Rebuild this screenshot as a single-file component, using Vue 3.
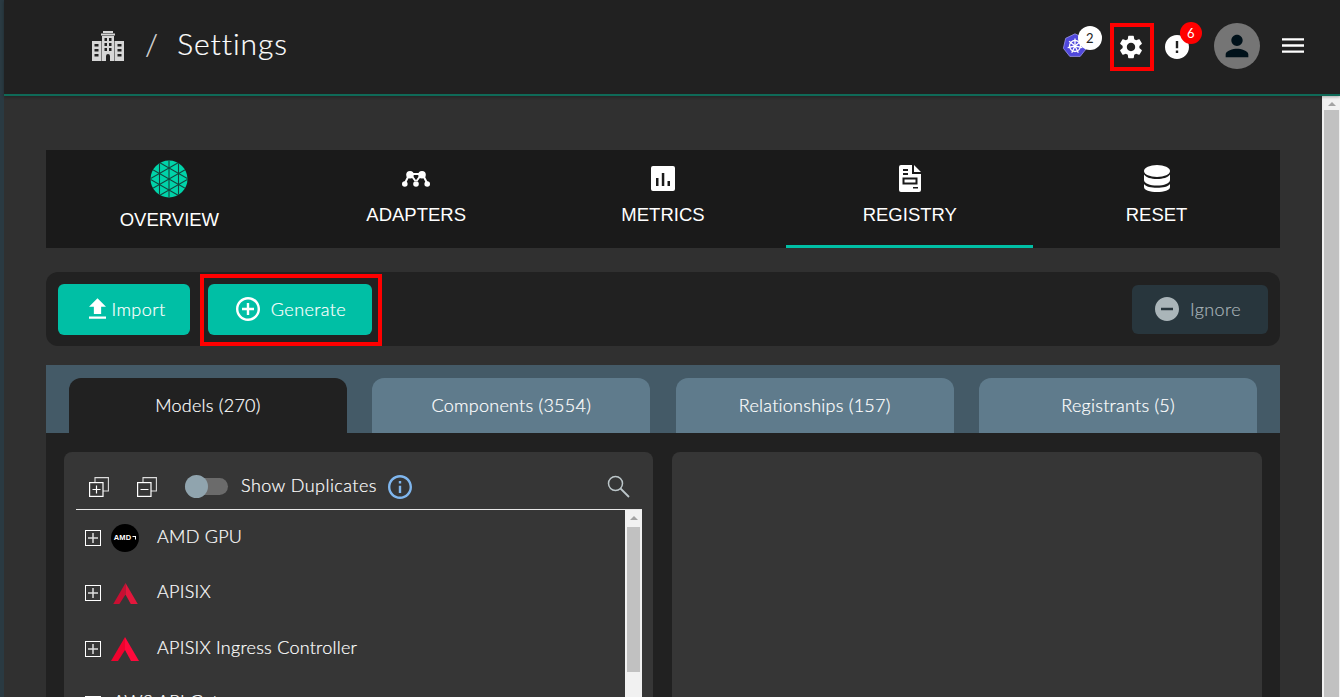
<script setup>
const gridLines = []
for (const x of [-19, -9.5, 0, 9.5, 19]) {
  gridLines.push({ x1: x, y1: -20, x2: x, y2: 20 })
}
for (const b of [-22, -11, 0, 11, 22]) {
  gridLines.push({ x1: -20, y1: b - 11.5, x2: 20, y2: b + 11.5 })
  gridLines.push({ x1: -20, y1: b + 11.5, x2: 20, y2: b - 11.5 })
}

const sections = [
  { label: 'OVERVIEW', key: 'overview' },
  { label: 'ADAPTERS', key: 'adapters' },
  { label: 'METRICS', key: 'metrics' },
  { label: 'REGISTRY', key: 'registry', active: true },
  { label: 'RESET', key: 'reset' }
]

const registryTabs = [
  { label: 'Models (270)', active: true },
  { label: 'Components (3554)' },
  { label: 'Relationships (157)' },
  { label: 'Registrants (5)' }
]

const models = [
  { name: 'AMD GPU', logo: 'amd' },
  { name: 'APISIX', logo: 'apisix-dim' },
  { name: 'APISIX Ingress Controller', logo: 'apisix' },
  { name: 'AWS API Gateway', logo: 'none' }
]

const wheelSpokes = [0, 51.4, 102.8, 154.2, 205.6, 257, 308.4]
</script>

<template>
  <div class="page">
    <div class="edge"></div>
    <div class="main">
      <header class="topbar">
        <div class="crumbs">
          <svg class="building" viewBox="0 0 32 30" width="32" height="30">
            <path fill="#d6d6d6" d="M11 0h10v2h-10zM9 2.500h14v2H9zM10 5h12v25h-4v-5a2 2 0 0 0-4 0v5h-4zM0 10h9.500v20H0zM22.500 10H32v20h-9.500z" />
            <path fill="#212121" d="M12.500 7h2.500v3h-2.500zM17 7h2.500v3H17zM12.500 12h2.500v3h-2.500zM17 12h2.500v3H17zM12.500 17h2.500v3h-2.500zM17 17h2.500v3H17zM2.500 13h4v2.500h-4zM2.500 18h4v2.500h-4zM2.500 23h4v2.500h-4zM25.500 13h4v2.500h-4zM25.500 18h4v2.500h-4zM25.500 23h4v2.500h-4z" />
          </svg>
          <span class="slash">/</span>
          <span class="crumb-title">Settings</span>
        </div>
        <div class="actions">
          <div class="k8s">
            <svg viewBox="0 0 26 26" width="26" height="26">
              <path fill="#5048dc" stroke="#9a95e6" stroke-width=".8" d="M13 .8l9.300 4.500 2.300 10-6.400 8.100H7.800l-6.400-8.100 2.300-10z" />
              <g stroke="#fff" stroke-width="1.300" fill="none">
                <circle cx="13" cy="13" r="5.500" />
                <line v-for="a in wheelSpokes" :key="a" x1="13" y1="13" x2="13" y2="5.500" :transform="`rotate(${a} 13 13)`" />
              </g>
            </svg>
            <span class="count count-white">2</span>
          </div>
          <div class="gear-mark">
            <svg viewBox="0 0 24 24" width="28" height="28"><path fill="#fff" d="M19.140 12.940c.04-.3.06-.61.06-.94 0-.32-.02-.64-.07-.94l2.030-1.580c.18-.14.23-.41.12-.61l-1.920-3.320c-.12-.22-.37-.29-.59-.22l-2.390.96c-.5-.38-1.030-.7-1.620-.94l-.36-2.540c-.04-.24-.24-.41-.48-.41h-3.840c-.24 0-.43.17-.47.41l-.36 2.540c-.59.24-1.130.57-1.620.94l-2.390-.96c-.22-.08-.47 0-.59.22L2.740 8.870c-.12.21-.08.47.12.61l2.030 1.580c-.05.3-.09.63-.09.94s.02.64.07.94l-2.030 1.580c-.18.14-.23.41-.12.61l1.920 3.320c.12.22.37.29.59.22l2.390-.96c.5.38 1.030.7 1.620.94l.36 2.540c.05.24.24.41.48.41h3.840c.24 0 .44-.17.47-.41l.36-2.540c.59-.24 1.130-.56 1.620-.94l2.390.96c.22.08.47 0 .59-.22l1.920-3.320c.12-.22.07-.47-.12-.61l-2.010-1.580zM12 15.600c-1.980 0-3.600-1.620-3.600-3.600s1.620-3.600 3.600-3.600 3.600 1.620 3.600 3.600-1.620 3.600-3.600 3.600z" /></svg>
          </div>
          <div class="alert">
            <svg viewBox="2 2 20 20" width="24" height="24"><path fill="#fff" d="M12 2C6.480 2 2 6.480 2 12s4.480 10 10 10 10-4.480 10-10S17.520 2 12 2zm1 15h-2v-2h2v2zm0-4h-2V7h2v6z" /></svg>
            <span class="count count-red">6</span>
          </div>
          <div class="avatar">
            <svg viewBox="0 0 24 24" width="34" height="34"><path fill="#00111a" d="M12 12c2.210 0 4-1.790 4-4s-1.790-4-4-4-4 1.790-4 4 1.790 4 4 4zm0 2c-2.670 0-8 1.340-8 4v2h16v-2c0-2.660-5.330-4-8-4z" /></svg>
          </div>
          <svg class="burger" viewBox="3 6 18 12" width="22" height="15"><path fill="#fff" d="M3 18h18v-2H3v2zm0-5h18v-2H3v2zm0-7v2h18V6H3z" /></svg>
        </div>
      </header>

      <div class="scroll-area">
        <div class="content">
          <nav class="sections">
            <div v-for="s in sections" :key="s.key" class="section" :class="{ 'section-active': s.active, 'section-overview': s.key === 'overview' }">
              <svg v-if="s.key === 'overview'" class="section-icon" viewBox="-19 -19 38 38" width="38" height="38">
                <clipPath id="overview-clip"><circle r="18.500" /></clipPath>
                <circle r="18.500" fill="#00d3a9" />
                <g clip-path="url(#overview-clip)" stroke="#14443c" stroke-width="1.100">
                  <line v-for="(l, i) in gridLines" :key="i" :x1="l.x1" :y1="l.y1" :x2="l.x2" :y2="l.y2" />
                </g>
              </svg>
              <div v-else class="section-slot">
                <svg v-if="s.key === 'adapters'" viewBox="0 0 28 16" width="28" height="16">
                  <g fill="#fff">
                    <circle cx="2.800" cy="13" r="2.800" /><circle cx="14" cy="13" r="2.800" /><circle cx="25.200" cy="13" r="2.800" />
                    <circle cx="8" cy="3.800" r="3.800" /><circle cx="20" cy="3.800" r="3.800" />
                  </g>
                  <path fill="none" stroke="#fff" stroke-width="2" d="M3 12L7 4M8 3h12M21 4l4 8M9 4l4.500 6M19 4l-4.500 6" />
                </svg>
                <svg v-else-if="s.key === 'metrics'" viewBox="0 0 24 25" width="24" height="25">
                  <path fill="#fff" fill-rule="evenodd" d="M2 0h20a2 2 0 0 1 2 2v21a2 2 0 0 1-2 2H2a2 2 0 0 1-2-2V2a2 2 0 0 1 2-2zM5 12v8h2.500v-8zM10.800 7v13h2.500V7zM16.500 15v5H19v-5z" />
                </svg>
                <svg v-else-if="s.key === 'registry'" viewBox="0 0 22 27" width="22" height="27">
                  <path fill="#fff" d="M2 0h11v9h9v16a2 2 0 0 1-2 2H2a2 2 0 0 1-2-2V2a2 2 0 0 1 2-2zM15 0l7 7h-7z" />
                  <g fill="#1a1a1a">
                    <rect x="4" y="4" width="5" height="2" /><rect x="4" y="8" width="5" height="2" /><rect x="14" y="22" width="5" height="1.500" />
                  </g>
                  <rect x="4.500" y="13.500" width="13" height="5" fill="none" stroke="#1a1a1a" stroke-width="2" />
                </svg>
                <svg v-else viewBox="0 0 26 27" width="26" height="27">
                  <ellipse cx="13" cy="6" rx="13" ry="6" fill="#fff" />
                  <path fill="#fff" d="M0 9.500c2 3 7 4.500 13 4.500s11-1.500 13-4.500V15c0 3.500-6 5.500-13 5.500S0 18.500 0 15z" />
                  <path fill="#fff" d="M0 19c2 3 7 3.700 13 3.700S24 22 26 19v3c0 3.500-6 5-13 5S0 25.500 0 22z" />
                </svg>
              </div>
              <span class="section-label">{{ s.label }}</span>
            </div>
          </nav>

          <div class="toolbar">
            <button class="btn btn-import">
              <svg viewBox="5 3 14 17" width="17" height="21"><path fill="#fff" d="M9 16h6v-6h4l-7-7-7 7h4zm-4 2h14v2H5z" /></svg>
              <span>Import</span>
            </button>
            <div class="mark-box">
              <button class="btn btn-generate">
                <svg viewBox="2 2 20 20" width="24" height="24"><path fill="#fff" d="M13 7h-2v4H7v2h4v4h2v-4h4v-2h-4V7zm-1-5C6.480 2 2 6.480 2 12s4.480 10 10 10 10-4.480 10-10S17.520 2 12 2zm0 18c-4.410 0-8-3.590-8-8s3.590-8 8-8 8 3.590 8 8-3.590 8-8 8z" /></svg>
                <span>Generate</span>
              </button>
            </div>
            <button class="btn btn-ignore">
              <svg viewBox="2 2 20 20" width="24" height="24"><path fill="#aab5b9" d="M12 2C6.480 2 2 6.480 2 12s4.480 10 10 10 10-4.480 10-10S17.520 2 12 2zm5 11H7v-2h10v2z" /></svg>
              <span>Ignore</span>
            </button>
          </div>

          <div class="registry">
            <div class="registry-tabs">
              <div v-for="t in registryTabs" :key="t.label" class="registry-tab" :class="{ 'registry-tab-active': t.active }">{{ t.label }}</div>
            </div>
            <div class="registry-body">
              <div class="card card-list">
                <div class="card-head">
                  <svg class="dup" viewBox="0 0 20 20" width="20" height="20">
                    <path fill="none" stroke="#ddd" stroke-width="1.100" d="M6 5V.6h13.400V14H14" />
                    <rect x=".6" y="5.600" width="13.400" height="13.800" fill="none" stroke="#fff" stroke-width="1.200" />
                    <path stroke="#fff" stroke-width="1.200" d="M3.500 12.500h8M7.500 8.500v8" />
                  </svg>
                  <svg class="dup dup-minus" viewBox="0 0 20 20" width="20" height="20">
                    <path fill="none" stroke="#ddd" stroke-width="1.100" d="M6 5V.6h13.400V14H14" />
                    <rect x=".6" y="5.600" width="13.400" height="13.800" fill="none" stroke="#fff" stroke-width="1.200" />
                    <path stroke="#fff" stroke-width="1.200" d="M3.500 12.500h8" />
                  </svg>
                  <div class="switch"><span class="switch-thumb"></span></div>
                  <span class="switch-label">Show Duplicates</span>
                  <svg class="info" viewBox="2 2 20 20" width="24" height="24"><path fill="#7fb6ee" d="M11 7h2v2h-2zm0 4h2v6h-2zm1-9C6.480 2 2 6.480 2 12s4.480 10 10 10 10-4.480 10-10S17.520 2 12 2zm0 18c-4.410 0-8-3.590-8-8s3.590-8 8-8 8 3.590 8 8-3.590 8-8 8z" /></svg>
                  <svg class="search" viewBox="0 0 23 23" width="23" height="23">
                    <circle cx="8.500" cy="8.500" r="7" fill="none" stroke="#bcc6c9" stroke-width="1.500" />
                    <path stroke="#bcc6c9" stroke-width="1.800" d="M13.500 13.500l8.500 8.500" />
                  </svg>
                </div>
                <div class="list-wrap">
                  <div class="list">
                    <div v-for="m in models" :key="m.name" class="row" :class="{ 'row-plain': m.logo === 'none' }">
                      <span class="expander">
                        <svg viewBox="0 0 10 10" width="10" height="10"><path stroke="#ddd" stroke-width="1.500" d="M0 5h10M5 0v10" /></svg>
                      </span>
                      <div v-if="m.logo !== 'none'" class="logo">
                        <span v-if="m.logo === 'amd'" class="amd">AMD<svg viewBox="0 0 6 6" width="4" height="4"><path fill="#fff" d="M0 0h6v6L4.500 4.500V1.500H1.500z" /></svg></span>
                        <svg v-else-if="m.logo === 'apisix-dim'" viewBox="0 0 28 24" width="25" height="21">
                          <path fill="#c80f32" d="M14 0L0 24h7l7-11z" /><path fill="#e3173c" d="M14 0l14 24h-8l-6-11z" />
                        </svg>
                        <svg v-else viewBox="0 0 28 24" width="28" height="24">
                          <path fill="#f0032e" d="M14 0L0 24h7l7-11z" /><path fill="#ff0a3c" d="M14 0l14 24h-8l-6-11z" />
                        </svg>
                      </div>
                      <span class="row-name">{{ m.name }}</span>
                    </div>
                  </div>
                  <div class="list-bar">
                    <span class="bar-arrow"></span>
                    <div class="bar-thumb"></div>
                  </div>
                </div>
              </div>
              <div class="card"></div>
            </div>
          </div>
        </div>
        <div class="page-bar">
          <span class="bar-arrow"></span>
          <div class="page-thumb"></div>
        </div>
      </div>
    </div>
  </div>
</template>

<style>
html, body {
  margin: 0;
  height: 100%;
  overflow: hidden;
  background: #303030;
}
</style>

<style scoped>
.page {
  display: flex;
  height: 697px;
  overflow: hidden;
  font-family: Lato, "Open Sans", sans-serif;
  font-weight: 300;
  letter-spacing: .25px;
  -webkit-text-stroke: .2px;
  color: #fff;
}

.edge {
  width: 4px;
  flex-shrink: 0;
  background: #2a3a42;
}

.main {
  flex: 1;
  display: flex;
  flex-direction: column;
  min-width: 0;
}

.topbar {
  position: relative;
  z-index: 1;
  height: 96px;
  box-sizing: border-box;
  flex-shrink: 0;
  display: flex;
  align-items: center;
  justify-content: space-between;
  background: #212121;
  border-bottom: 2px solid #0f6a58;
  box-shadow: 0 1px 3px rgba(0, 0, 0, .3);
  padding: 0 36px 3px 88px;
}

.crumbs {
  display: flex;
  align-items: center;
}

.slash {
  margin: 0 0 6px 21px;
  font-size: 30px;
  color: #ddd;
}

.crumb-title {
  margin: 0 0 6px 19px;
  font-size: 30px;
  letter-spacing: .9px;
}

.actions {
  display: flex;
  align-items: center;
}

.k8s,
.alert {
  position: relative;
  display: flex;
}

.k8s {
  margin: 1px 0 0 1px;
}

.count {
  position: absolute;
  display: flex;
  align-items: center;
  justify-content: center;
  border-radius: 50%;
  font-size: 13px;
  font-weight: 400;
  -webkit-text-stroke: 0;
}

.count-white {
  left: 16px;
  top: -7px;
  width: 24px;
  height: 24px;
  background: #fff;
  color: #222;
}

.count-red {
  left: 15px;
  top: -13px;
  width: 22px;
  height: 22px;
  background: #f00;
  color: #fff;
}

.gear-mark {
  width: 44px;
  height: 48px;
  box-sizing: border-box;
  display: flex;
  align-items: center;
  justify-content: center;
  margin: 2px 0 0 22px;
  padding-right: 2px;
  border: 4px solid #f00;
}

.alert {
  margin: 2px 0 0 11px;
}

.avatar {
  width: 46px;
  height: 46px;
  display: flex;
  align-items: center;
  justify-content: center;
  margin-left: 25px;
  border-radius: 50%;
  background: #757575;
}

.burger {
  margin-left: 22px;
}

.scroll-area {
  flex: 1;
  display: flex;
  min-height: 0;
}

.content {
  flex: 1;
  min-width: 0;
  padding: 54px 42px 0;
  overflow: hidden;
  background: #303030;
}

.page-bar {
  width: 15px;
  flex-shrink: 0;
  padding: 0 1px;
  border-left: 1px solid #eee;
  background: #f1f1f1;
  display: flex;
  flex-direction: column;
  align-items: center;
}

.bar-arrow {
  margin: 6px 0 4px;
  border-left: 4px solid transparent;
  border-right: 4px solid transparent;
  border-bottom: 4px solid #a3a3a3;
}

.page-thumb {
  align-self: stretch;
  flex: 1;
  background: #c1c1c1;
}

.sections {
  display: flex;
  height: 98px;
  background: #1a1a1a;
}

.section {
  flex: 1;
  box-sizing: border-box;
  display: flex;
  flex-direction: column;
  align-items: center;
  padding-top: 15px;
  border-bottom: 3px solid transparent;
}

.section-overview {
  padding-top: 10px;
}

.section-active {
  border-bottom-color: #00bfa5;
}

.section-icon {
  margin-bottom: 12px;
}

.section-slot {
  height: 27px;
  display: flex;
  align-items: center;
  justify-content: center;
  margin-bottom: 13px;
}

.section-label {
  font-family: "Liberation Sans", Arial, sans-serif;
  font-size: 18.5px;
  font-weight: 400;
  letter-spacing: 0;
  -webkit-text-stroke: 0;
  line-height: 20px;
}

.toolbar {
  display: flex;
  align-items: flex-start;
  height: 74px;
  box-sizing: border-box;
  margin-top: 24px;
  padding: 2px 12px 0;
  border-radius: 12px;
  background: #212121;
}

.btn {
  display: flex;
  align-items: center;
  justify-content: center;
  border: none;
  border-radius: 6px;
  color: #fff;
  font: inherit;
  font-size: 18px;
  letter-spacing: .4px;
  -webkit-text-stroke: .2px;
  padding: 0 0 2px;
}

.btn-import {
  width: 132px;
  height: 51px;
  margin-top: 10px;
  padding-left: 6px;
  gap: 6px;
  background: #00bfa5;
}

.mark-box {
  box-sizing: border-box;
  height: 72px;
  margin-left: 10px;
  padding: 6px 6px 0 4px;
  border: 4px solid #f00;
}

.btn-generate {
  width: 164px;
  height: 51px;
  padding-left: 2px;
  gap: 11px;
  background: #00bfa5;
}

.btn-ignore {
  width: 136px;
  height: 49px;
  margin: 11px 0 0 auto;
  padding-right: 4px;
  gap: 11px;
  background: #28363d;
  color: #a6b1b6;
}

.registry {
  margin-top: 19px;
}

.registry-tabs {
  display: flex;
  gap: 25.6px;
  height: 68px;
  box-sizing: border-box;
  padding: 13px 23px 0;
  background: #445a67;
}

.registry-tab {
  flex: 1;
  display: flex;
  align-items: center;
  justify-content: center;
  padding-bottom: 1px;
  border-radius: 12px 12px 0 0;
  background: #5f7b8c;
  font-size: 18px;
}

.registry-tab-active {
  background: #212121;
}

.registry-body {
  display: flex;
  gap: 19px;
  height: 264px;
  box-sizing: border-box;
  padding: 19px 18px 0;
  background: #212121;
}

.card {
  flex: 1;
  border-radius: 8px 8px 0 0;
  background: #363636;
  overflow: hidden;
}

.card-list {
  flex: none;
  width: 589px;
}

.card-head {
  height: 58px;
  box-sizing: border-box;
  display: flex;
  align-items: center;
  margin: 0 11px 0 12px;
  padding: 12px 12px 0 13px;
  border-bottom: 1px solid #e8e8e8;
}

.dup-minus {
  margin-left: 28px;
}

.switch {
  position: relative;
  width: 43px;
  height: 17px;
  margin-left: 28px;
  border-radius: 9px;
  background: #6b6b6b;
}

.switch-thumb {
  position: absolute;
  left: 0;
  top: -3px;
  width: 23px;
  height: 23px;
  border-radius: 50%;
  background: #90a4ae;
}

.switch-label {
  margin: 0 0 3px 13px;
  font-size: 18px;
  letter-spacing: .45px;
}

.info {
  margin-left: 11px;
}

.search {
  margin-left: auto;
}

.list-wrap {
  display: flex;
  margin: 0 11px 0 12px;
  height: 190px;
}

.list {
  flex: 1;
  min-width: 0;
}

.row {
  height: 55.5px;
  display: flex;
  align-items: center;
  padding-left: 9px;
}

.expander {
  width: 16px;
  height: 16px;
  box-sizing: border-box;
  display: flex;
  align-items: center;
  justify-content: center;
  border: 1.300px solid #fff;
}

.logo {
  width: 28px;
  height: 28px;
  display: flex;
  align-items: center;
  justify-content: center;
  margin-left: 10px;
}

.amd {
  width: 28px;
  height: 28px;
  display: flex;
  align-items: center;
  justify-content: center;
  gap: 1px;
  border-radius: 50%;
  background: #000;
  font-family: "Liberation Sans", sans-serif;
  font-size: 7.500px;
  font-weight: 700;
  letter-spacing: .2px;
  -webkit-text-stroke: 0;
}

.row-name {
  margin-left: 18px;
  font-size: 18px;
  transform: translateY(-2px);
}

.row-plain .row-name {
  margin-left: 12px;
  transform: translateY(-3px);
}

.list-bar {
  width: 17px;
  flex-shrink: 0;
  display: flex;
  flex-direction: column;
  align-items: center;
  background: #f1f1f1;
}

.list-bar .bar-arrow {
  margin: 6px 0 7px;
}

.bar-thumb {
  width: 13px;
  height: 145px;
  background: #c1c1c1;
}
</style>
